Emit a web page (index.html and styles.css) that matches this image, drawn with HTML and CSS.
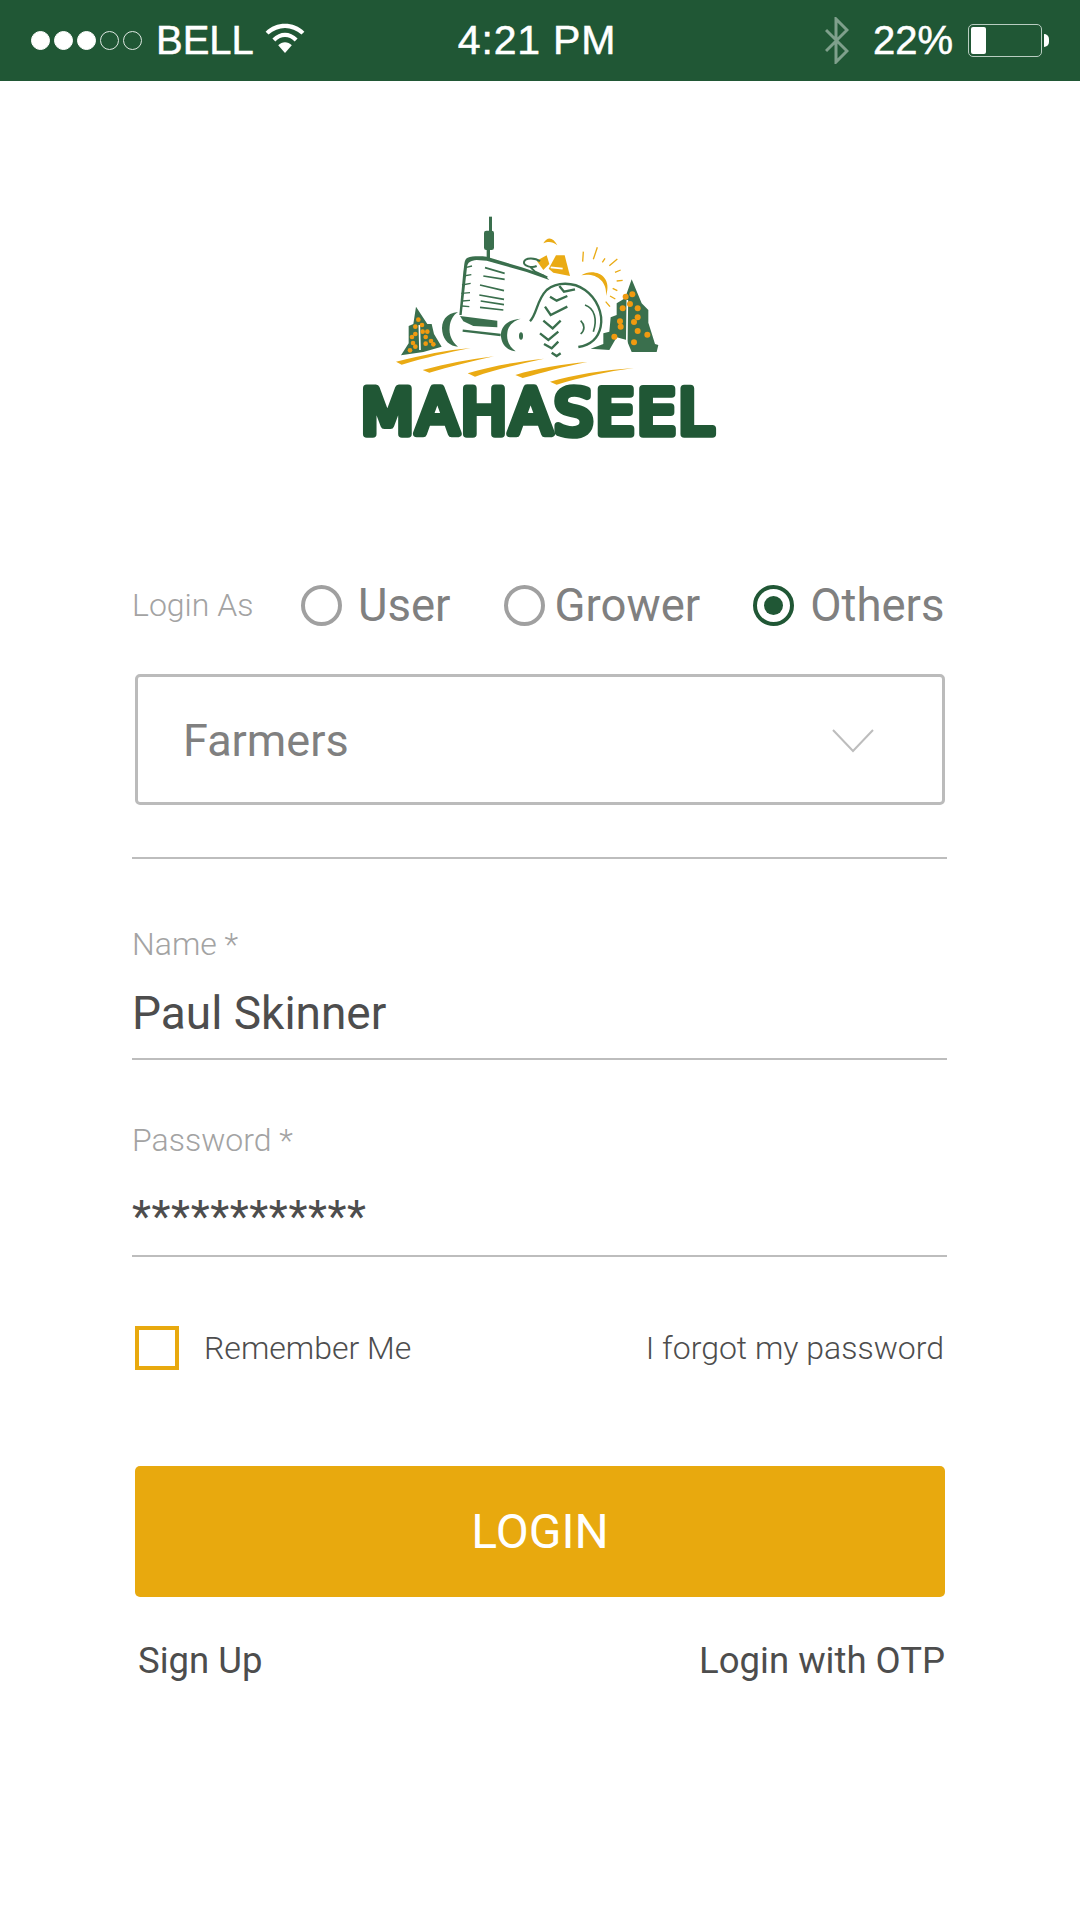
FILE: index.html
```html
<!DOCTYPE html>
<html lang="en">
<head>
<meta charset="utf-8">
<title>Mahaseel Login</title>
<link rel="stylesheet" href="styles.css">
</head>
<body>
<header class="status">
  <div class="status-left">
    <div class="signal"><i class="dot on"></i><i class="dot on"></i><i class="dot on"></i><i class="dot"></i><i class="dot"></i></div>
    <span class="carrier">BELL</span>
    <svg class="wifi" viewBox="0 0 40 32"><path d="M0 10C11-1 29-1 40 10l-3 3C27 4 13 4 3 13z"/><path d="M7 17c8-8 18-8 26 0l-3 3c-6-6-14-6-20 0z"/><path d="M13 24c4-4 10-4 14 0l-7 8z"/></svg>
  </div>
  <div class="time">4:21 PM</div>
  <div class="status-right">
    <svg class="bt" viewBox="0 0 24 47"><path d="M1 13l21 21-11 11V2l11 11L1 34" fill="none" stroke="#7fa08c" stroke-width="3"/></svg>
    <span class="pct">22%</span>
    <div class="battery"><div class="level"></div></div>
    <div class="tip"></div>
  </div>
</header>
<main class="page">
  <div class="logo">
    <svg class="logo-art" viewBox="0 0 1200 750" aria-label="Mahaseel logo">
      <g class="lt">
        <rect x="447" y="50" width="9" height="50"/>
        <rect x="432" y="92" width="30" height="58" rx="7"/>
        <rect x="440" y="148" width="10" height="28"/>
        <path d="M440 170C420 168 395 168 383 173 371 178 374 195 370 215L358 345H365L381 202C383 186 392 182 410 180L440 182 560 216 628 240 612 224 545 202z"/>
        <path d="M360 348L472 362V382L400 378 370 364z"/>
        <path d="M354 336C318 338 302 365 307 395 311 422 330 438 354 440 337 425 326 405 329 380 331 360 340 345 354 336z"/>
        <path d="M542 356C503 358 480 380 483 410 486 437 505 452 527 454 507 440 499 420 502 398 504 378 520 362 542 356z"/>
        <ellipse cx="543" cy="408" rx="6" ry="11"/>
        <path d="M183 466L206 430 206 378 220 372 228 320 262 372 275 372 282 402 305 440 250 456z"/>
        <path d="M752 446L790 432 790 400 808 395 812 352 830 345 830 310 855 295 875 238 905 310 925 330 925 368 935 400 945 432 955 435 950 456 875 456 860 420 830 412 808 450z"/>
      </g>
      <g class="lines">
        <path class="w4" d="M376 203L396 198M370 228L394 224M366 255L392 250M364 280L390 278M366 303L390 301M366 318L388 320"/>
        <path class="w5" d="M435 203L494 220M430 228L494 238M420 255L492 272M418 285L492 298M422 303L492 314M420 322L490 330"/>
        <path class="w7" d="M368 392L482 405"/>
        <path class="w7" d="M570 364C592 340 590 300 620 270 650 245 700 245 735 270 770 295 790 340 782 380 775 415 750 435 715 441"/>
        <path class="w5" d="M735 315C765 325 772 360 760 395M722 362C735 375 735 390 722 402"/>
        <path class="w7" d="M658 258L672 275 705 268M630 290L650 302 682 288M615 320L632 345 682 320M610 362L638 385 662 362M600 400L625 420 655 395M612 432L635 445 655 425M635 458L650 468 662 460"/>
      </g>
      <path class="trunk" d="M238 375L240 450M862 300L860 452"/>
      <g class="or">
        <path d="M168 485C250 465 320 450 392 444 320 458 260 472 185 494z"/>
        <path d="M248 510C320 490 390 478 462 469 390 485 330 500 268 518z"/>
        <path d="M383 520C450 500 530 485 612 476 540 492 470 507 405 530z"/>
        <path d="M526 525C590 505 670 492 742 486 670 500 610 517 548 534z"/>
        <path d="M630 545C700 525 790 510 882 504 800 515 720 532 650 554z"/>
        <path d="M610 130C622 108 640 112 652 136 636 124 625 124 610 130z"/>
        <path d="M626 206L648 166H674L690 228 640 218z"/>
        <path d="M590 182L620 166 628 192 610 210z"/>
        <path d="M724 226C760 203 820 225 798 288 802 240 765 218 724 226z"/>
      </g>
      <path class="cut" d="M632 202L668 206"/>
      <path class="rays" d="M730 155L728 185M772 142L760 178M795 175L787 187M832 177L808 197M842 210L825 217M848 241L830 243M832 272L818 265M826 297L810 288M810 320L797 305"/>
      <path class="wheel" d="M600 184C585 172 555 172 552 186 550 198 575 205 590 198M570 200L585 215 622 232"/>
      <g class="fruit big">
        <circle cx="857" cy="290" r="9"/><circle cx="877" cy="283" r="9"/><circle cx="870" cy="312" r="9"/><circle cx="848" cy="325" r="9"/><circle cx="893" cy="325" r="9"/><circle cx="893" cy="352" r="9"/><circle cx="882" cy="366" r="9"/><circle cx="840" cy="364" r="9"/><circle cx="842" cy="380" r="9"/><circle cx="893" cy="393" r="9"/><circle cx="922" cy="404" r="9"/><circle cx="823" cy="410" r="9"/><circle cx="882" cy="427" r="9"/>
      </g>
      <g class="fruit">
        <circle cx="235" cy="359" r="7"/><circle cx="246" cy="375" r="7"/><circle cx="226" cy="380" r="7"/><circle cx="262" cy="395" r="7"/><circle cx="248" cy="395" r="7"/><circle cx="226" cy="402" r="7"/><circle cx="216" cy="411" r="7"/><circle cx="257" cy="411" r="7"/><circle cx="219" cy="429" r="7"/><circle cx="273" cy="423" r="7"/><circle cx="280" cy="433" r="7"/><circle cx="257" cy="431" r="7"/><circle cx="226" cy="440" r="7"/><circle cx="210" cy="451" r="7"/>
      </g>
      <text class="wordmark" x="62" y="703" textLength="1056">MAHASEEL</text>
    </svg>
  </div>

  <div class="role-row">
    <span class="role-title">Login As</span>
    <label class="role role-user"><i class="radio"></i><span>User</span></label>
    <label class="role role-grower"><i class="radio"></i><span>Grower</span></label>
    <label class="role role-others"><i class="radio checked"></i><span>Others</span></label>
  </div>

  <div class="select">
    <span>Farmers</span>
    <svg class="chev" viewBox="0 0 42 24"><path d="M1 1l20 21L41 1" fill="none" stroke="#bdbdbd" stroke-width="2"/></svg>
  </div>
  <div class="divider"></div>

  <div class="field field-name">
    <div class="label">Name *</div>
    <div class="value">Paul Skinner</div>
  </div>
  <div class="field field-pass">
    <div class="label">Password *</div>
    <div class="value stars">************</div>
  </div>

  <div class="options">
    <label class="remember"><i class="check"></i><span>Remember Me</span></label>
    <span class="forgot">I forgot my password</span>
  </div>

  <button class="login">LOGIN</button>

  <div class="links">
    <span class="signup">Sign Up</span>
    <span>Login with OTP</span>
  </div>
</main>
</body>
</html>
```
FILE: styles.css
```css
* { box-sizing: border-box; }
html, body { margin: 0; padding: 0; background: #fff; }
body { width: 1080px; height: 1920px; overflow: hidden; font-family: Roboto, "Liberation Sans", sans-serif; }

.status { height: 81px; background: #205735; color: #fff; display: grid; grid-template-columns: 1fr auto 1fr; align-items: center; padding: 0 31px; font-family: "Liberation Sans", Arial, sans-serif; font-size: 40px; -webkit-text-stroke: 0.5px #fff; }
.status-left { display: flex; align-items: center; }
.signal { display: flex; gap: 4px; }
.dot { width: 19px; height: 19px; border-radius: 50%; border: 1px solid #dfe8e2; display: block; }
.dot.on { background: #fff; border-color: #fff; }
.carrier { margin-left: 14px; }
.wifi { width: 40px; height: 31px; margin-left: 11px; fill: #fff; margin-top: -6px; }
.time { font-size: 41px; letter-spacing: 0.8px; margin-left: -6px; }
.status-right { display: flex; align-items: center; justify-content: flex-end; }
.bt { width: 24px; height: 47px; margin-right: 24px; }
.pct { margin-right: 15px; }
.battery { width: 74px; height: 33px; border: 1.5px solid #b9cdc1; border-radius: 5px; padding: 2px; }
.level { width: 15px; height: 100%; background: #fff; border-radius: 2px; }
.tip { width: 5px; height: 13px; background: #fff; border-radius: 0 6px 6px 0; margin-left: 2px; }

.page { padding: 0 133px 0 132px; }
.logo { display: flex; justify-content: center; margin-top: 119px; }
.logo-art { width: 400px; height: 250px; display: block; }
.lt { fill: #3a6f4d; }
.lines { fill: none; stroke: #3a6f4d; stroke-width: 4; }
.w4 { stroke-width: 4; }
.w5 { stroke-width: 5; }
.w7 { stroke-width: 7; }
.trunk { fill: none; stroke: #fff; stroke-width: 5; }
.cut { fill: none; stroke: #fff; stroke-width: 5; }
.or { fill: #eaab14; }
.rays { fill: none; stroke: #eaab14; stroke-width: 4; }
.wheel { fill: none; stroke: #3a6f4d; stroke-width: 6; }
.fruit { fill: #f09a10; }
.wordmark { font-family: "DejaVu Sans", sans-serif; font-weight: 400; font-size: 185px; fill: #205735; stroke: #205735; stroke-width: 23; stroke-linejoin: round; stroke-linecap: round; }

.role-row { display: flex; align-items: center; height: 60px; margin-top: 125px; }
.role-title { width: 120px; font-size: 32px; font-weight: 300; color: #a3a3a3; white-space: nowrap; }
.role { display: flex; align-items: center; font-size: 45.5px; color: #808080; }
.radio { display: block; width: 41px; height: 41px; border-radius: 50%; border: 4px solid #a0a0a0; }
.radio.checked { border-color: #205735; position: relative; }
.radio.checked::after { content: ""; position: absolute; inset: 7px; border-radius: 50%; background: #205735; }
.role-user { margin-left: 49px; gap: 16px; }
.role-grower { margin-left: 53px; gap: 10px; }
.role-others { margin-left: 53px; gap: 16px; }

.select { display: flex; align-items: center; justify-content: space-between; height: 131px; margin: 39px 2px 0 3px; padding: 2px 68px 0 45px; border: 3px solid #bbb; border-radius: 5px; font-size: 45px; color: #808080; }
.chev { width: 42px; height: 24px; }
.divider { height: 2px; background: #bdbdbd; margin-top: 52px; }

.field { border-bottom: 2px solid #bdbdbd; }
.field-name { margin-top: 67px; height: 134px; }
.field-pass { margin-top: 62px; height: 135px; }
.label { font-size: 32px; font-weight: 300; color: #a3a3a3; line-height: 36px; }
.value { font-size: 46px; color: #4d4d4d; line-height: 52px; margin-top: 25px; }
.stars { font-size: 44px; letter-spacing: 0.6px; margin-top: 33px; }

.options { display: flex; align-items: center; justify-content: space-between; margin: 69px 3px 0 3px; height: 44px; font-size: 32px; font-weight: 300; color: #4d4d4d; }
.remember { display: flex; align-items: center; gap: 25px; }
.check { display: block; width: 44px; height: 44px; border: 4px solid #e8a90e; }

.login { display: block; width: 810px; height: 131px; margin: 96px 0 0 3px; padding: 0; border: 0; border-radius: 5px; background: #e8a90e; color: #fff; font-family: Roboto, sans-serif; font-size: 48px; font-weight: 400; }

.links { display: flex; justify-content: space-between; margin: 42px 2px 0 6px; font-size: 36.5px; color: #4d4d4d; line-height: 44px; }
```
